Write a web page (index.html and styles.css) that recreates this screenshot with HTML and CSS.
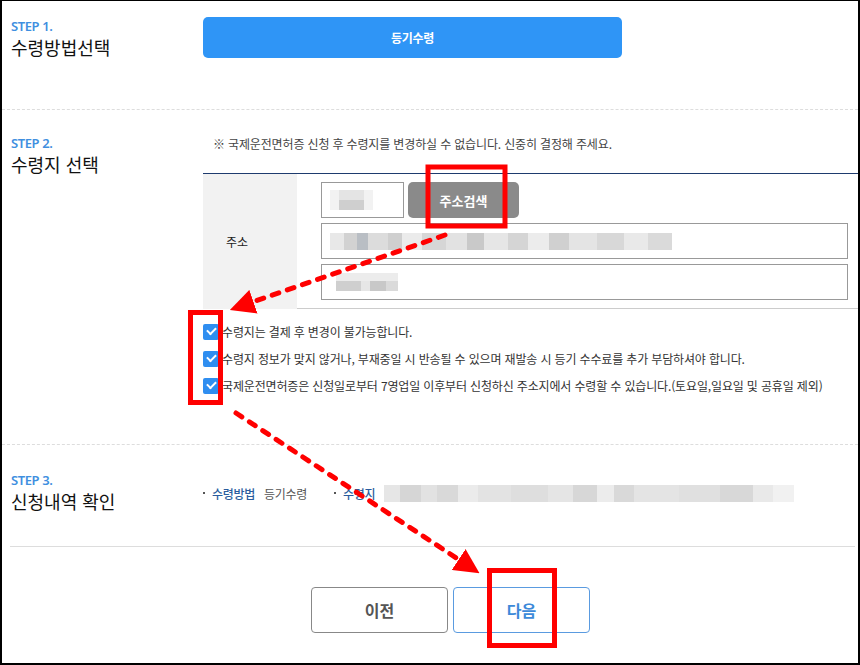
FILE: index.html
```html
<!DOCTYPE html>
<html lang="ko">
<head>
    <meta charset="UTF-8">
    <meta name="viewport" content="width=device-width, initial-scale=1.0">
    <title>국제운전면허증 수령지 선택</title>
    <link rel="stylesheet" href="styles.css">
</head>
<body>
<div class="frame">
    <section class="step step1">
        <div class="step-head">
            <p class="step-no">STEP 1.</p>
            <h2 class="step-title">수령방법선택</h2>
        </div>
        <div class="step-body">
            <button class="btn-method" type="button">등기수령</button>
        </div>
    </section>

    <section class="step step2">
        <div class="step-head">
            <p class="step-no">STEP 2.</p>
            <h2 class="step-title">수령지 선택</h2>
        </div>
        <div class="step-body">
            <p class="notice">※ 국제운전면허증 신청 후 수령지를 변경하실 수 없습니다. 신중히 결정해 주세요.</p>
            <div class="addr">
                <div class="addr-label">주소</div>
                <div class="addr-fields">
                    <div class="zip-row">
                        <div class="field zip"><span class="blur blur-zip"></span></div>
                        <button class="btn-search" type="button">주소검색</button>
                    </div>
                    <div class="field"><span class="blur blur-addr"></span></div>
                    <div class="field"><span class="blur blur-detail"></span></div>
                </div>
            </div>
            <ul class="checks">
                <li><span class="chk"></span>수령지는 결제 후 변경이 불가능합니다.</li>
                <li><span class="chk"></span>수령지 정보가 맞지 않거나, 부재중일 시 반송될 수 있으며 재발송 시 등기 수수료를 추가 부담하셔야 합니다.</li>
                <li><span class="chk"></span>국제운전면허증은 신청일로부터 7영업일 이후부터 신청하신 주소지에서 수령할 수 있습니다.(토요일,일요일 및 공휴일 제외)</li>
            </ul>
        </div>
    </section>

    <section class="step step3">
        <div class="step-head">
            <p class="step-no">STEP 3.</p>
            <h2 class="step-title">신청내역 확인</h2>
        </div>
        <div class="step-body summary">
            <span class="sum-item"><b>수령방법</b>등기수령</span>
            <span class="sum-item"><b>수령지</b><span class="blur blur-sum"></span></span>
        </div>
    </section>
    <div class="divider"></div>

    <div class="actions">
        <button class="btn-prev" type="button">이전</button>
        <button class="btn-next" type="button">다음</button>
    </div>

    <!-- 안내용 빨간 표시 -->
    <svg class="marks" width="860" height="665" viewBox="0 0 860 665">
        <defs>
            <marker id="head" markerWidth="5" markerHeight="5" refX="2" refY="2.5" orient="auto" markerUnits="strokeWidth">
                <path d="M0,0 L5,2.5 L0,5 z" fill="#f00"/>
            </marker>
        </defs>
        <rect x="428" y="167" width="77" height="59" fill="none" stroke="#f00" stroke-width="5"/>
        <rect x="190.5" y="312.5" width="30" height="90" fill="none" stroke="#f00" stroke-width="5"/>
        <rect x="489.5" y="570.5" width="65" height="75" fill="none" stroke="#f00" stroke-width="5"/>
        <line x1="445" y1="235" x2="244" y2="305" stroke="#f00" stroke-width="5" stroke-linecap="round" stroke-dasharray="7 9" marker-end="url(#head)"/>
        <line x1="236" y1="413" x2="467" y2="565" stroke="#f00" stroke-width="5" stroke-linecap="round" stroke-dasharray="7 9" marker-end="url(#head)"/>
    </svg>
</div>
</body>
</html>
```

FILE: styles.css
```css
*{
    margin: 0;
    padding: 0;
    box-sizing: border-box;
}
body{
    background: #fff;
    font-family: "Noto Sans CJK KR", "Noto Sans", sans-serif;
    color: #333;
}
.frame{
    position: relative;
    width: 860px;
    height: 665px;
    border: 2px solid #000;
    border-top-width: 1px;
    overflow: hidden;
}
.step{
    display: grid;
    grid-template-columns: 192px 1fr;
    padding-left: 9px;
    border-bottom: 1px dashed #ddd;
}
.step-no{
    font-family: "Noto Sans", sans-serif;
    font-size: 13px;
    line-height: 14px;
    font-weight: 600;
    letter-spacing: -0.4px;
    color: #3f8fe0;
}
.step-title{
    margin-top: 2px;
    font-size: 18px;
    line-height: 24px;
    font-weight: 400;
    letter-spacing: 0;
    color: #111;
}
.step1{
    padding-top: 16px;
    padding-bottom: 50px;
}
.step1 .step-head{
    margin-top: 2px;
}
.btn-method{
    width: 419px;
    height: 41px;
    border: 0;
    border-radius: 5px;
    background: #2f95f6;
    color: #fff;
    font-family: inherit;
    font-size: 12px;
    font-weight: 700;
    letter-spacing: -0.3px;
}
.step2{
    padding-top: 26px;
    padding-bottom: 50px;
}
.notice{
    padding-left: 10px;
    margin-bottom: 21px;
    font-size: 12px;
    line-height: 16px;
    letter-spacing: -0.15px;
    color: #444;
}
.addr{
    display: grid;
    grid-template-columns: 94px 1fr;
    border-top: 1px solid #1e3b6e;
}
.addr-label{
    display: flex;
    align-items: center;
    padding-left: 23px;
    background: #f2f2f2;
    font-size: 12px;
    color: #222;
}
.addr-fields{
    display: flex;
    flex-direction: column;
    gap: 5px;
    padding: 8px 10px 8px 24px;
    border-bottom: 1px solid #ccc;
}
.zip-row{
    display: flex;
    gap: 4px;
}
.field{
    height: 36px;
    border: 1px solid #999;
    background: #fff;
    display: flex;
    align-items: center;
}
.zip{
    width: 83px;
}
.btn-search{
    width: 111px;
    height: 36px;
    border: 0;
    border-radius: 5px;
    background: #8a8a8a;
    color: #fff;
    font-family: inherit;
    font-size: 13px;
    font-weight: 700;
}
.blur{
    display: inline-block;
}
.blur-zip{
    width: 43px;
    height: 20px;
    margin-left: 8px;
    background:
        linear-gradient(90deg, #f2f2f2 0 20%, transparent 20% 80%, #f2f2f2 80%),
        linear-gradient(180deg, #e4e4e4 0 50%, #cfcfcf 50%);
}
.blur-addr{
    width: 342px;
    height: 17px;
    margin-left: 8px;
    background: linear-gradient(90deg,
        #e8e8e8 0 4%, #d2d2d2 4% 8%, #b9bec4 8% 11%, #dcdcdc 11% 17%, #cfcfcf 17% 21%,
        #ebebeb 21% 27%, #d6d6d6 27% 34%, #e2e2e2 34% 40%, #c9c9c9 40% 45%, #e6e6e6 45% 52%,
        #d5d5d5 52% 58%, #ececec 58% 64%, #d0d0d0 64% 70%, #e4e4e4 70% 78%, #d8d8d8 78% 86%,
        #e9e9e9 86% 93%, #dadada 93%);
}
.blur-detail{
    width: 62px;
    height: 18px;
    margin-left: 14px;
    background:
        linear-gradient(180deg, #ececec 0 45%, transparent 45%),
        linear-gradient(90deg, #cfcfcf 0 40%, #e6e6e6 40% 55%, #c8c8c8 55% 80%, #dadada 80%);
}
.checks{
    list-style: none;
    padding-top: 15px;
}
.checks li{
    display: flex;
    align-items: center;
    gap: 3px;
    font-size: 12px;
    line-height: 16px;
    letter-spacing: -0.15px;
    color: #333;
}
.checks li + li{
    margin-top: 11px;
}
.chk{
    position: relative;
    flex: none;
    width: 16px;
    height: 16px;
    background: #2f8ef0;
    border-radius: 2px;
}
.chk::after{
    content: "";
    position: absolute;
    left: 4px;
    top: 3px;
    width: 7px;
    height: 4px;
    border-left: 2px solid #fff;
    border-bottom: 2px solid #fff;
    transform: rotate(-45deg);
}
.step3{
    align-items: center;
    padding-top: 28px;
    padding-bottom: 33px;
    border-bottom: 0;
}
.summary{
    display: flex;
    align-items: center;
    gap: 27px;
    font-size: 12px;
    letter-spacing: -0.3px;
    color: #555;
}
.sum-item{
    display: flex;
    align-items: center;
}
.sum-item::before{
    content: "";
    width: 2px;
    height: 2px;
    margin-right: 7px;
    background: #555;
}
.sum-item b{
    margin-right: 9px;
    font-weight: 500;
    color: #2a5c9e;
}
.blur-sum{
    width: 410px;
    height: 17px;
    margin-left: 0;
    background: linear-gradient(90deg,
        #e6e6e6 0 4%, #d6d6d6 4% 9%, #e2e2e2 9% 13%, #d9d9d9 13% 18%, #ebebeb 18% 23%,
        #e3e3e3 23% 31%, #dedede 31% 40%, #e5e5e5 40% 46%, #d7d7d7 46% 52%, #ececec 52% 56%,
        #d9d9d9 56% 61%, #e4e4e4 61% 72%, #e0e0e0 72% 82%, #d8d8d8 82% 90%, #e9e9e9 90% 95%, #f1f1f1 95%);
}
.divider{
    margin: 0 3px 0 8px;
    border-top: 1px solid #ddd;
}
.actions{
    display: flex;
    justify-content: center;
    gap: 5px;
    padding-top: 40px;
    padding-left: 41px;
}
.actions button{
    width: 137px;
    height: 46px;
    border-radius: 4px;
    background: #fff;
    font-family: inherit;
    font-size: 16px;
    font-weight: 700;
}
.btn-prev{
    border: 1px solid #888;
    color: #555;
}
.btn-next{
    border: 1px solid #5a9be0;
    color: #3d8ad9;
}
.marks{
    position: absolute;
    left: -2px;
    top: -1px;
    pointer-events: none;
}
```
